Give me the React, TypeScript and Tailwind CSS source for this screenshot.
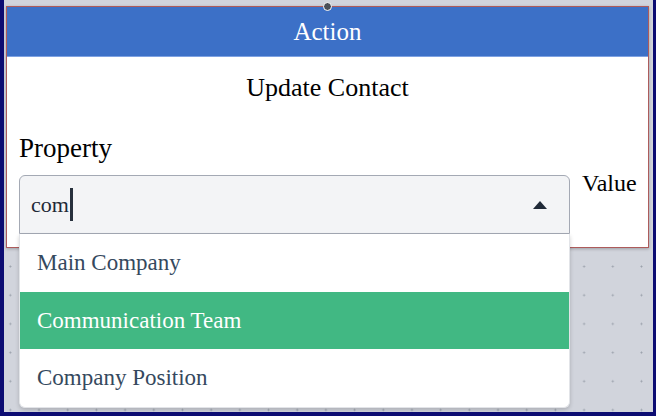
import React from "react"

const options = [
    { id: "main", label: "Main Company" },
    { id: "comm", label: "Communication Team" },
    { id: "pos", label: "Company Position" },
]

export default function App() {
    const highlighted = "comm"

    return (
        <div
            className="relative w-[656px] h-[416px] overflow-hidden border-l-4 border-r-[3px] border-b-4 border-[#0c0c72] bg-[#d1d4dc] bg-[radial-gradient(circle,#9aa0ab_0.8px,transparent_1.2px)] bg-[size:28.7px_28.7px] bg-[position:-8px_-6px] pt-[6px] pl-[2px]"
            style={{ fontFamily: '"Liberation Serif", "Times New Roman", serif' }}
        >
            {/* Node card */}
            <div className="relative w-[643px] h-[242px] bg-white border border-[#ad5b5b] shadow-[0_1px_3px_rgba(0,0,0,0.25)]">
                {/* Connection handle */}
                <div className="absolute -top-[5px] left-[316px] w-[9px] h-[9px] rounded-full bg-[#4b4f57] border border-white" />

                <div className="h-[50px] bg-[#3c70c7] border-b border-[#7ea2e2] flex items-center justify-center text-white text-[25px] leading-none">
                    Action
                </div>

                <div className="text-center text-[26px] leading-none text-black pt-[18px]">Update Contact</div>

                <div className="flex items-center pl-[12px] pt-[34px]">
                    <div className="w-[551px] shrink-0">
                        <div className="text-[27px] leading-none text-black mb-[13px]">Property</div>

                        {/* Multiselect */}
                        <div className="relative">
                            <div className="h-[59px] rounded-t-[6px] border border-[#a4a9b4] bg-[#f3f4f6] flex items-center pl-[11px] pr-[22px]">
                                <span className="text-[22px] leading-none text-[#1f2937]">com</span>
                                <span className="ml-[1px] w-[3px] h-[33px] bg-[#27303c]" />
                                <div className="ml-auto w-0 h-0 border-l-[7.5px] border-r-[7.5px] border-b-[8px] border-l-transparent border-r-transparent border-b-[#1f2937]" />
                            </div>

                            <ul className="absolute left-0 right-0 top-full z-10 bg-white border-x border-b border-[#e2e4e8] rounded-b-[6px] shadow-[0_2px_4px_rgba(0,0,0,0.18)] overflow-hidden">
                                {options.map((opt) => (
                                    <li
                                        key={opt.id}
                                        className={`h-[57.5px] flex items-center pl-[17px] text-[23px] leading-none ${opt.id === highlighted
                                            ? "bg-[#41b883] text-white"
                                            : "text-[#35495e]"
                                            }`}
                                    >
                                        {opt.label}
                                    </li>
                                ))}
                            </ul>
                        </div>
                    </div>

                    <div className="ml-[12px] text-[24px] leading-none text-black -mt-[3px]">Value</div>
                </div>
            </div>
        </div>
    )
}
